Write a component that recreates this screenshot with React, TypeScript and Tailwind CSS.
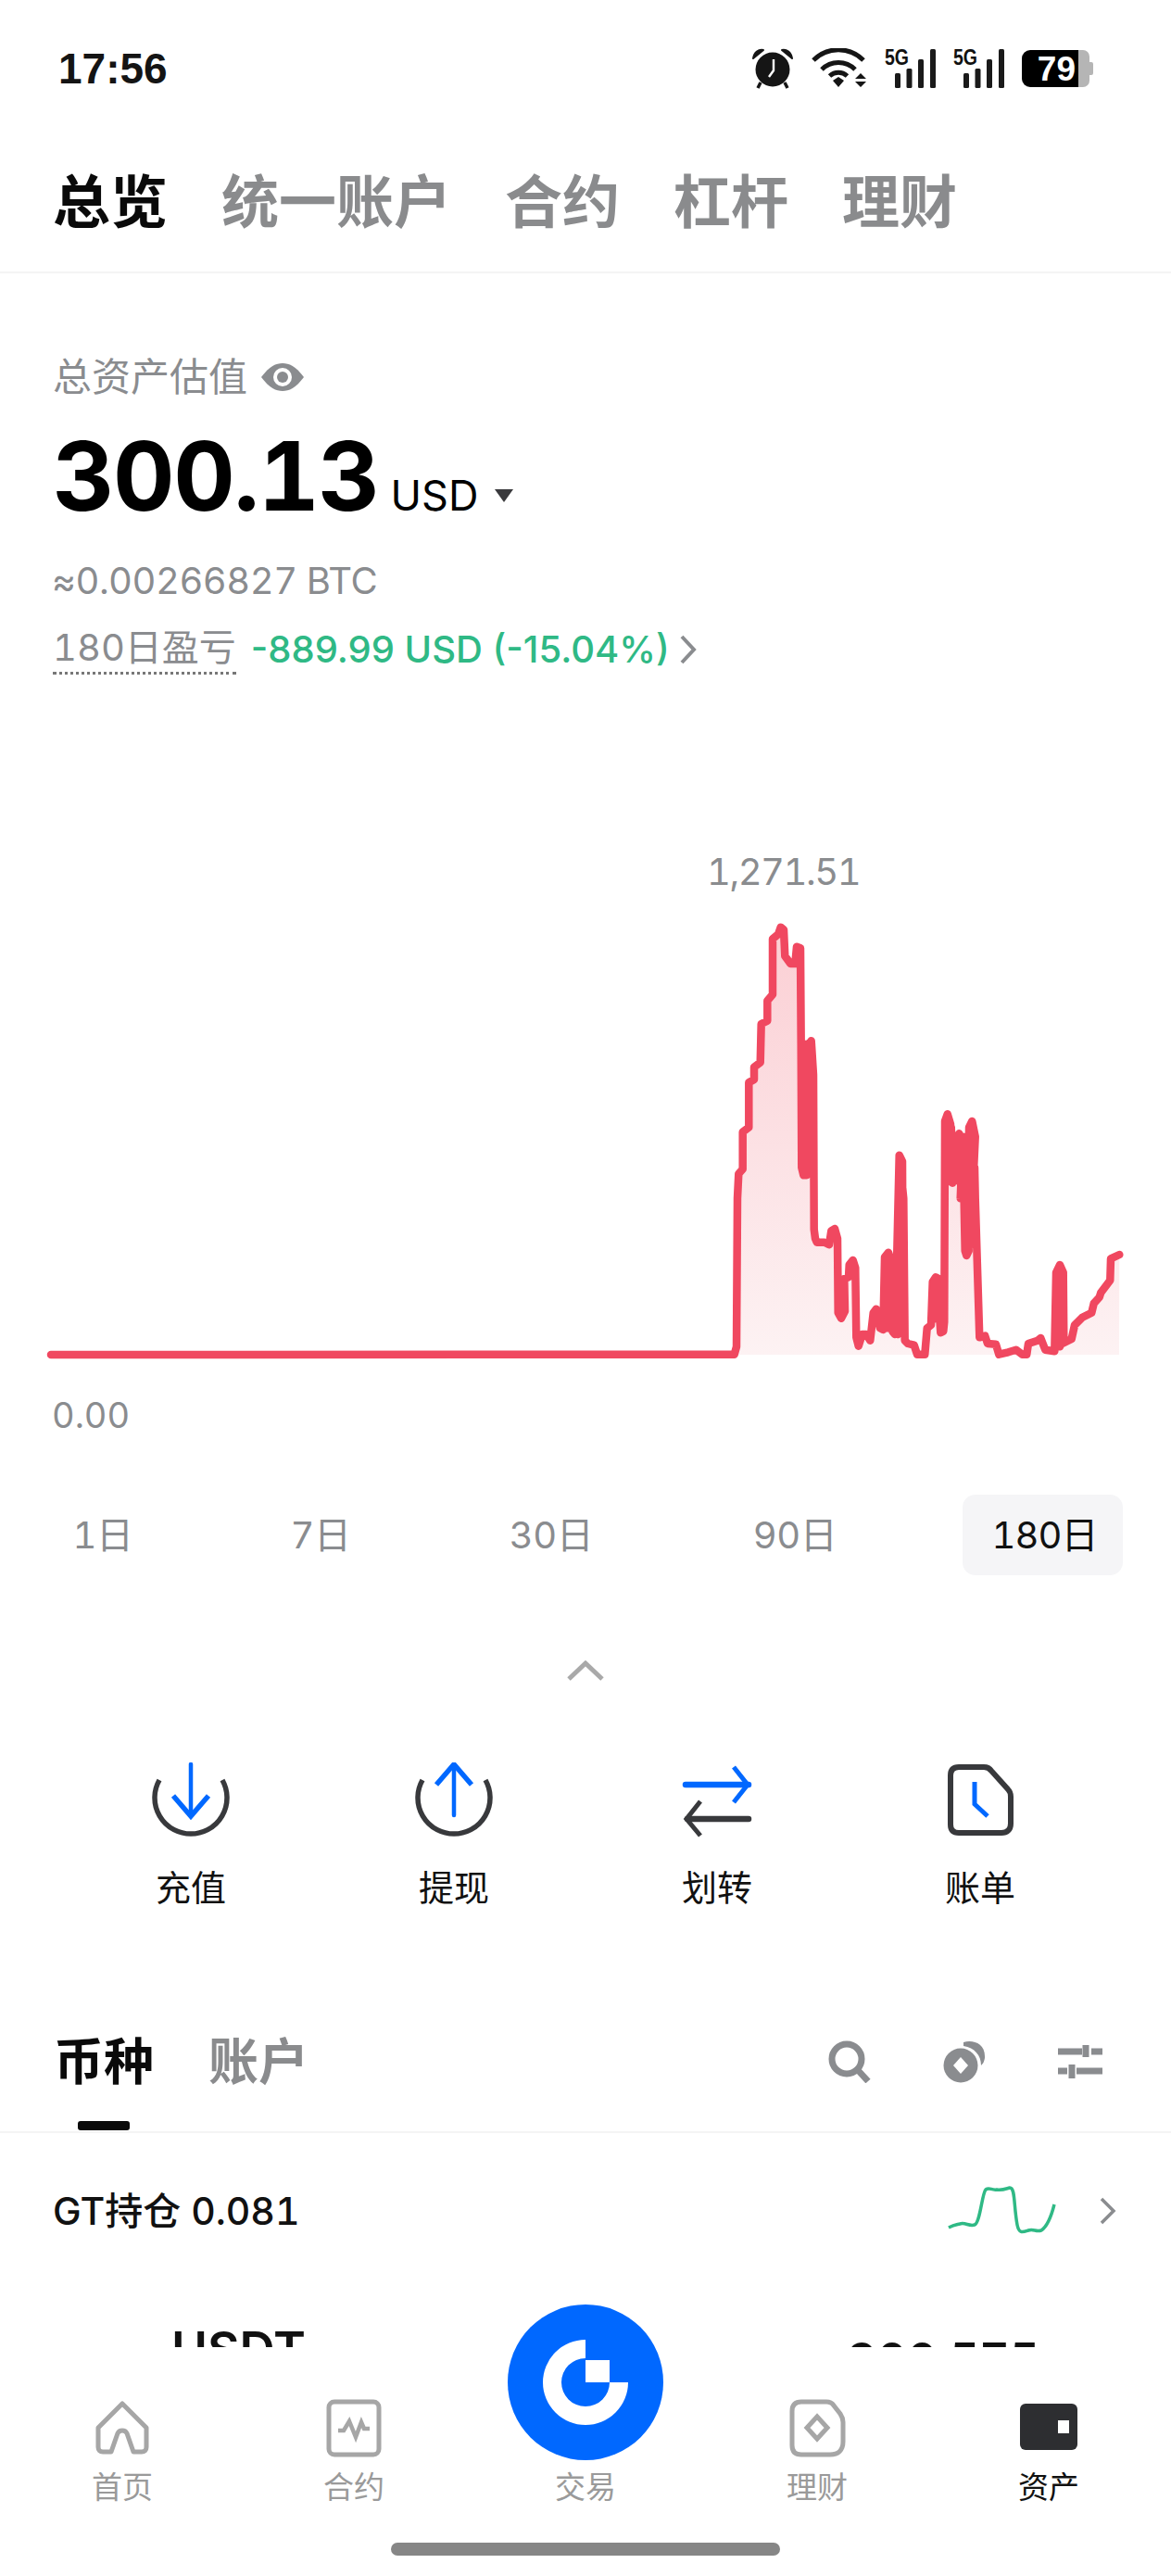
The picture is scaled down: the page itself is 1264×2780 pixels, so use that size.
import React from "react";

const raw: number[][] = [[-15,1505],[98,1505],[105,1480],[108,1000],[112,920],[125,905],[125,785],[145,770],[145,625],[162,615],[162,575],[182,560],[185,435],[205,425],[205,360],[222,340],[222,160],[240,145],[248,122],[258,130],[262,215],[280,240],[295,240],[300,185],[312,190],[314,500],[316,900],[322,925],[322,510],[332,925],[332,500],[340,900],[340,500],[347,490],[354,600],[356,1100],[360,1130],[365,1142],[390,1142],[405,1150],[412,1105],[423,1098],[432,1130],[434,1370],[444,1388],[456,1365],[454,1260],[468,1255],[470,1215],[482,1200],[490,1225],[493,1450],[500,1478],[512,1440],[525,1440],[538,1460],[548,1370],[557,1358],[570,1420],[580,1425],[585,1190],[597,1175],[605,1200],[592,1420],[605,1400],[610,1430],[618,1440],[622,1300],[632,860],[642,880],[644,1400],[628,1440],[636,900],[646,1000],[650,1460],[660,1470],[680,1475],[690,1505],[715,1505],[722,1420],[735,1410],[740,1270],[750,1255],[760,1260],[745,1390],[755,1270],[766,1435],[775,1430],[778,1400],[780,750],[788,727],[798,760],[790,940],[805,950],[800,770],[810,945],[818,925],[826,790],[838,815],[830,1000],[838,800],[845,1170],[850,1185],[857,1170],[848,800],[855,1170],[858,770],[868,750],[878,800],[862,1150],[876,900],[878,1000],[892,1450],[910,1445],[918,1470],[945,1472],[955,1505],[985,1498],[1010,1490],[1030,1505],[1045,1505],[1050,1470],[1080,1460],[1090,1452],[1105,1490],[1135,1495],[1140,1240],[1152,1215],[1163,1240],[1165,1450],[1152,1480],[1152,1240],[1160,1470],[1190,1455],[1200,1410],[1225,1385],[1255,1370],[1262,1340],[1280,1320],[1285,1305],[1315,1265],[1317,1195],[1345,1182]];
const pts = raw.map(([x, y]) => [760 + x / 3, 960 + y / 3]);
const linePts = "M55 1462 L" + pts.map((p) => p.map((n) => n.toFixed(1)).join(" ")).join(" L");
const areaPts = "M792 1462 L" + pts.slice(2).map((p) => p.map((n) => n.toFixed(1)).join(" ")).join(" L") + " L1208 1462 Z";

function Signal() {
  return (
    <svg width="56" height="52" viewBox="0 -8 56 52" className="-mt-[8px] block">
      <text x="0" y="18" fontSize="24" fontWeight="700" fill="#111" fontFamily="Liberation Sans" textLength="26" lengthAdjust="spacingAndGlyphs">5G</text>
      <rect x="11" y="27" width="6" height="16" rx="1.5" fill="#1a1a1a" />
      <rect x="23.5" y="22" width="6" height="21" rx="1.5" fill="#1a1a1a" />
      <rect x="36" y="12" width="6" height="31" rx="1.5" fill="#1a1a1a" />
      <rect x="49" y="1" width="6" height="42" rx="1.5" fill="#1a1a1a" />
    </svg>
  );
}

function StatusBar() {
  return (
    <div className="flex h-[148px] items-center justify-between pl-[63px] pr-[84px]">
      <span className="text-[46px] font-semibold leading-none text-[#141414] [font-family:'Liberation_Sans',sans-serif]">17:56</span>
      <div className="flex items-center gap-[18px]">
        <svg width="46" height="46" viewBox="0 0 46 46" className="block">
          <circle cx="23" cy="24" r="18.5" fill="#151515" />
          <path d="M24 13v12l-5 7" stroke="#fff" strokeWidth="2.4" fill="none" />
          <path d="M2 12C3 5 8 2 13 3L2 12ZM44 12C43 5 38 2 33 3L44 12Z" fill="#151515" stroke="#151515" strokeWidth="2" strokeLinejoin="round" />
          <path d="M10 38l-3 6M36 38l3 6" stroke="#151515" strokeWidth="3.5" />
        </svg>
        <svg width="62" height="44" viewBox="0 0 62 44" className="block">
          <path d="M3 13C18-2 42-2 57 13" stroke="#151515" strokeWidth="5" fill="none" />
          <path d="M12 23C22 13 38 13 48 23" stroke="#151515" strokeWidth="5" fill="none" />
          <path d="M20.5 30C26 25 34 25 39.5 30" stroke="#151515" strokeWidth="5" fill="none" />
          <path d="M24 35l6-4 6 4-6 7z" fill="#151515" />
          <path d="M48 33l6-6 6 6zM48 36h12l-6 6z" fill="#151515" />
        </svg>
        <Signal />
        <Signal />
        <div className="flex h-[40px] items-center">
          <div className="flex h-[40px] w-[61px] items-center justify-end rounded-l-[9px] bg-black pr-[3px] text-[37px] font-bold leading-none text-white [font-family:'Liberation_Sans',sans-serif]">79</div>
          <div className="h-[40px] w-[12px] rounded-r-[7px] bg-[#b5b5b5]" />
          <div className="h-[14px] w-[4px] rounded-r-[2px] bg-[#b5b5b5]" />
        </div>
      </div>
    </div>
  );
}

function ActionIcon({ kind }: { kind: string }) {
  const blue = "#0068ff";
  const dark = "#38393c";
  if (kind === "in")
    return (
      <svg width="84" height="84" viewBox="0 0 84 84" className="block">
        <path d="M8 19A39 39 0 1 0 76 19" stroke={dark} strokeWidth="5.5" fill="none" />
        <path d="M42 2V56" stroke={blue} strokeWidth="4.5" fill="none" strokeLinecap="round" />
        <path d="M23 36L42 58 61 36" stroke={blue} strokeWidth="5.5" fill="none" />
      </svg>
    );
  if (kind === "out")
    return (
      <svg width="84" height="84" viewBox="0 0 84 84" className="block">
        <path d="M8 19A39 39 0 1 0 76 19" stroke={dark} strokeWidth="5.5" fill="none" />
        <path d="M42 6V57" stroke={blue} strokeWidth="4.5" fill="none" strokeLinecap="round" />
        <path d="M23 24L42 2 61 24" stroke={blue} strokeWidth="5.5" fill="none" />
      </svg>
    );
  if (kind === "swap")
    return (
      <svg width="84" height="84" viewBox="0 0 84 84" className="block">
        <path d="M8 24H76" stroke={blue} strokeWidth="6.5" strokeLinecap="round" />
        <path d="M60 5L75 24 60 43" stroke={blue} strokeWidth="5" fill="none" />
        <path d="M76 61H10" stroke={dark} strokeWidth="6.5" strokeLinecap="round" />
        <path d="M24 42L9 61 24 79" stroke={dark} strokeWidth="5" fill="none" />
      </svg>
    );
  return (
    <svg width="84" height="84" viewBox="0 0 84 84" className="block">
      <path d="M19 5H46C50 5 52 6 54 9L72 29C74 31 75 33 75 37V66C75 73 71 76 65 76H19C13 76 10 73 10 67V14C10 8 13 5 19 5Z" stroke={dark} strokeWidth="6" fill="none" />
      <path d="M36 21V45L50 58" stroke={blue} strokeWidth="5" fill="none" />
    </svg>
  );
}

function NavIcon({ kind }: { kind: string }) {
  const g = "#a6a6a6";
  if (kind === "home")
    return (
      <svg width="64" height="64" viewBox="0 0 64 64" className="block">
        <path d="M32 6L58 32V53C58 56 56 58 53 58H44L37 38C35 34 29 34 27 38L20 58H11C8 58 6 56 6 53V32Z" stroke={g} strokeWidth="5" fill="none" strokeLinejoin="round" />
      </svg>
    );
  if (kind === "contract")
    return (
      <svg width="64" height="64" viewBox="0 0 64 64" className="block">
        <rect x="5" y="4" width="54" height="57" rx="6" stroke={g} strokeWidth="5" fill="none" />
        <path d="M15 35H21L27 25 34 42 40 26 43 33H49" stroke={g} strokeWidth="4.5" fill="none" />
      </svg>
    );
  if (kind === "earn")
    return (
      <svg width="64" height="64" viewBox="0 0 64 64" className="block">
        <path d="M15 4H42C46 4 48 5 50 8L57 17C59 20 60 22 60 26V47C60 56 55 61 46 61H15C8 61 5 57 5 51V14C5 8 8 4 15 4Z" stroke={g} strokeWidth="5" fill="none" />
        <path d="M32 20L43 32 32 44 21 32Z" stroke={g} strokeWidth="5" fill="none" />
      </svg>
    );
  return (
    <svg width="64" height="64" viewBox="0 0 64 64" className="block">
      <rect x="1" y="6" width="62" height="50" rx="6" fill="#2d2e31" />
      <rect x="42" y="24" width="12" height="14" fill="#fff" />
    </svg>
  );
}

const navItems = [
  ["home", "首页", "text-[#9a9a9a]"],
  ["contract", "合约", "text-[#9a9a9a]"],
  ["", "交易", "text-[#9a9a9a]"],
  ["earn", "理财", "text-[#9a9a9a]"],
  ["wallet", "资产", "text-[#111111]"],
];

export default function App() {
  return (
    <div className="relative h-[2780px] w-[1264px] overflow-hidden bg-white tabular-nums [font-family:Inter,'Noto_Sans_CJK_SC',sans-serif]">
      <StatusBar />

      <div className="flex h-[147px] items-center gap-[58px] border-b-2 border-[#f4f4f4] pb-[4px] pl-[57px] text-[62px] font-bold leading-none text-[#8a8b8d]">
        <span className="text-[#0a0a0a]">总览</span>
        <span>统一账户</span>
        <span>合约</span>
        <span>杠杆</span>
        <span>理财</span>
      </div>

      <div className="mt-[87px] flex h-[50px] items-center pl-[57px] text-[42px] leading-none text-[#8a8c8f]">
        <span>总资产估值</span>
        <svg width="48" height="32" viewBox="0 0 48 32" className="ml-[14px] block">
          <path d="M1 16C10 4 17 1 24 1s14 3 23 15C38 28 31 31 24 31S10 28 1 16Z" fill="#8a8c8f" />
          <circle cx="24" cy="16" r="10" fill="#fff" />
          <circle cx="24" cy="16" r="6" fill="#8a8c8f" />
        </svg>
      </div>

      <div className="mt-[32px] flex h-[100px] items-baseline pl-[57px] text-black">
        <span className="text-[103px] font-bold leading-[100px] tracking-[-1.5px]">300.13</span>
        <span className="ml-[13px] text-[45px] font-normal leading-none">USD</span>
        <svg width="20" height="14" viewBox="0 0 20 14" className="relative -top-[9px] ml-[18px] block">
          <path d="M0 0H20L10 14Z" fill="#3a3a3d" />
        </svg>
      </div>

      <div className="mt-[38px] flex h-[50px] items-center pl-[56px] text-[40px] leading-none tracking-[-0.5px] text-[#8a8c8f]">≈0.00266827 BTC</div>

      <div className="mt-[23px] flex h-[52px] items-center pl-[57px] text-[40px] leading-none">
        <span className="border-b-[3px] border-dotted border-[#777] pb-[6px] text-[#8a8c8f] -mb-[5px]">180日盈亏</span>
        <span className="ml-[16px] font-medium text-[#2fb985] [font-variant-numeric:proportional-nums]">-889.99 USD (-15.04%)</span>
        <svg width="20" height="32" viewBox="0 0 20 32" className="ml-[10px] block">
          <path d="M3 2L16 16 3 30" stroke="#8a8c8f" strokeWidth="4" fill="none" />
        </svg>
      </div>

      <div className="mt-[189px] flex h-[50px] items-center pl-[763px] text-[40px] leading-none tracking-[-1.5px] text-[#8a8c8f]">1,271.51</div>

      <svg width="1264" height="524" viewBox="0 966 1264 524" className="block">
        <defs>
          <linearGradient id="chartFill" gradientUnits="userSpaceOnUse" x1="0" y1="1000" x2="0" y2="1462">
            <stop offset="0" stopColor="#fbcfd4" />
            <stop offset="1" stopColor="#fdf2f3" />
          </linearGradient>
        </defs>
        <path d={areaPts} fill="url(#chartFill)" />
        <path d={linePts} fill="none" stroke="#f04860" strokeWidth="8.5" strokeLinejoin="round" strokeLinecap="round" />
      </svg>

      <div className="mt-[12px] flex h-[50px] items-center pl-[56px] text-[38px] leading-none text-[#8a8c8f]">0.00</div>

      <div className="mt-[61px] flex h-[87px] items-center text-[40px] leading-none tracking-[-0.5px] text-[#8a8c8f]">
        <span className="w-[222px] text-center">1日</span>
        <span className="w-[248px] text-center">7日</span>
        <span className="w-[250px] text-center">30日</span>
        <span className="w-[276px] text-center">90日</span>
        <span className="ml-[43px] flex h-[87px] w-[173px] items-center justify-center rounded-[14px] bg-[#f5f5f7] pl-[4px] tracking-[-1px] text-[#111111]">180日</span>
      </div>

      <div className="mt-[92px] flex justify-center">
        <svg width="40" height="22" viewBox="0 0 40 22" className="block">
          <path d="M2 20L20 3 38 20" stroke="#a9a9a9" strokeWidth="5" fill="none" />
        </svg>
      </div>

      <div className="mt-[88px] grid grid-cols-4 px-[64px]">
        {[["in", "充值"], ["out", "提现"], ["swap", "划转"], ["bill", "账单"]].map(([k, t]) => (
          <div key={k} className="flex flex-col items-center">
            <ActionIcon kind={k} />
            <span className="mt-[26px] text-[38px] leading-[50px] text-[#111111]">{t}</span>
          </div>
        ))}
      </div>

      <div className="mt-[134px] flex h-[106px] items-start justify-between border-b-2 border-[#f4f4f4] pl-[58px] pr-[74px]">
        <div className="flex gap-[59px] text-[54px] font-bold leading-[60px]">
          <div className="flex flex-col items-center">
            <span className="text-[#0a0a0a]">币种</span>
            <span className="mt-[33px] h-[10px] w-[56px] rounded-[3px] bg-[#0a0a0a]" />
          </div>
          <span className="text-[#8a8b8d]">账户</span>
        </div>
        <div className="flex items-center gap-[78px] pt-[6px]">
          <svg width="46" height="46" viewBox="0 0 46 46" className="block">
            <circle cx="20" cy="20" r="16" stroke="#8a8c8f" strokeWidth="7" fill="none" />
            <path d="M31 31L43 44" stroke="#8a8c8f" strokeWidth="7" />
          </svg>
          <svg width="46" height="46" viewBox="0 0 46 46" className="block">
            <circle cx="19" cy="27" r="18.5" fill="#8a8c8f" />
            <path d="M19 18L27 27 19 36 11 27Z" fill="#fff" />
            <path d="M22 2C32-1 46 3 45 19C44 24 43 25 41 27C41 16 34 8 22 6Z" fill="#8a8c8f" />
          </svg>
          <svg width="48" height="36" viewBox="0 0 48 36" className="block">
            <path d="M0 7H26M36 7H48M30 0V13M0 28H10M20 28H48M15 21V36" stroke="#8a8c8f" strokeWidth="7" />
          </svg>
        </div>
      </div>

      <div className="flex h-[168px] items-center justify-between pl-[57px] pr-[58px]">
        <span className="text-[41px] font-medium leading-none text-[#111111]">GT持仓 0.081</span>
        <div className="flex items-center gap-[46px]">
          <svg width="118" height="54" viewBox="0 0 118 54" className="block">
            <path d="M2 45C8 42 10 42 14 41C20 39 24 44 30 42C36 40 38 8 42 4C46 1 48 5 54 4C60 5 64 3 68 2C74 2 72 20 76 42C78 52 82 50 88 48C94 46 96 50 102 48C108 44 112 36 116 20" stroke="#2fb985" strokeWidth="3.5" fill="none" />
          </svg>
          <svg width="20" height="30" viewBox="0 0 20 30" className="block">
            <path d="M3 2L16 15 3 28" stroke="#8a8c8f" strokeWidth="3.5" fill="none" />
          </svg>
        </div>
      </div>

      <div className="mt-[36px] flex items-start justify-between pl-[185px] pr-[142px]">
        <span className="text-[53px] font-semibold leading-[60px] text-[#111111]">USDT</span>
        <span className="mt-[10px] text-[50px] font-semibold leading-[60px] text-[#111111]">300.575</span>
      </div>

      <div className="absolute bottom-0 left-0 h-[247px] w-[1264px] bg-white">
        <div className="grid grid-cols-5 pt-[55px] pl-[7px] pr-[7px]">
          {navItems.map(([k, t, c]) => (
            <div key={t} className="flex flex-col items-center">
              <div className="h-[64px] w-[64px]">{k ? <NavIcon kind={k} /> : null}</div>
              <span className={`mt-[12px] text-[33px] leading-[40px] ${c}`}>{t}</span>
            </div>
          ))}
        </div>
        <div className="absolute bottom-[22px] left-[422px] h-[14px] w-[420px] rounded-full bg-[#868686]" />
      </div>

      <div className="absolute left-[548px] top-[2487px] flex h-[168px] w-[168px] items-center justify-center rounded-full bg-[#0068ff]">
        <svg width="100" height="100" viewBox="-50 -50 100 100" className="block">
          <path d="M0-46A46 46 0 1 0 46 0H26A26 26 0 1 1 0-26Z" fill="#fff" />
          <rect x="0" y="-24" width="26" height="24" fill="#fff" />
        </svg>
      </div>
    </div>
  );
}
